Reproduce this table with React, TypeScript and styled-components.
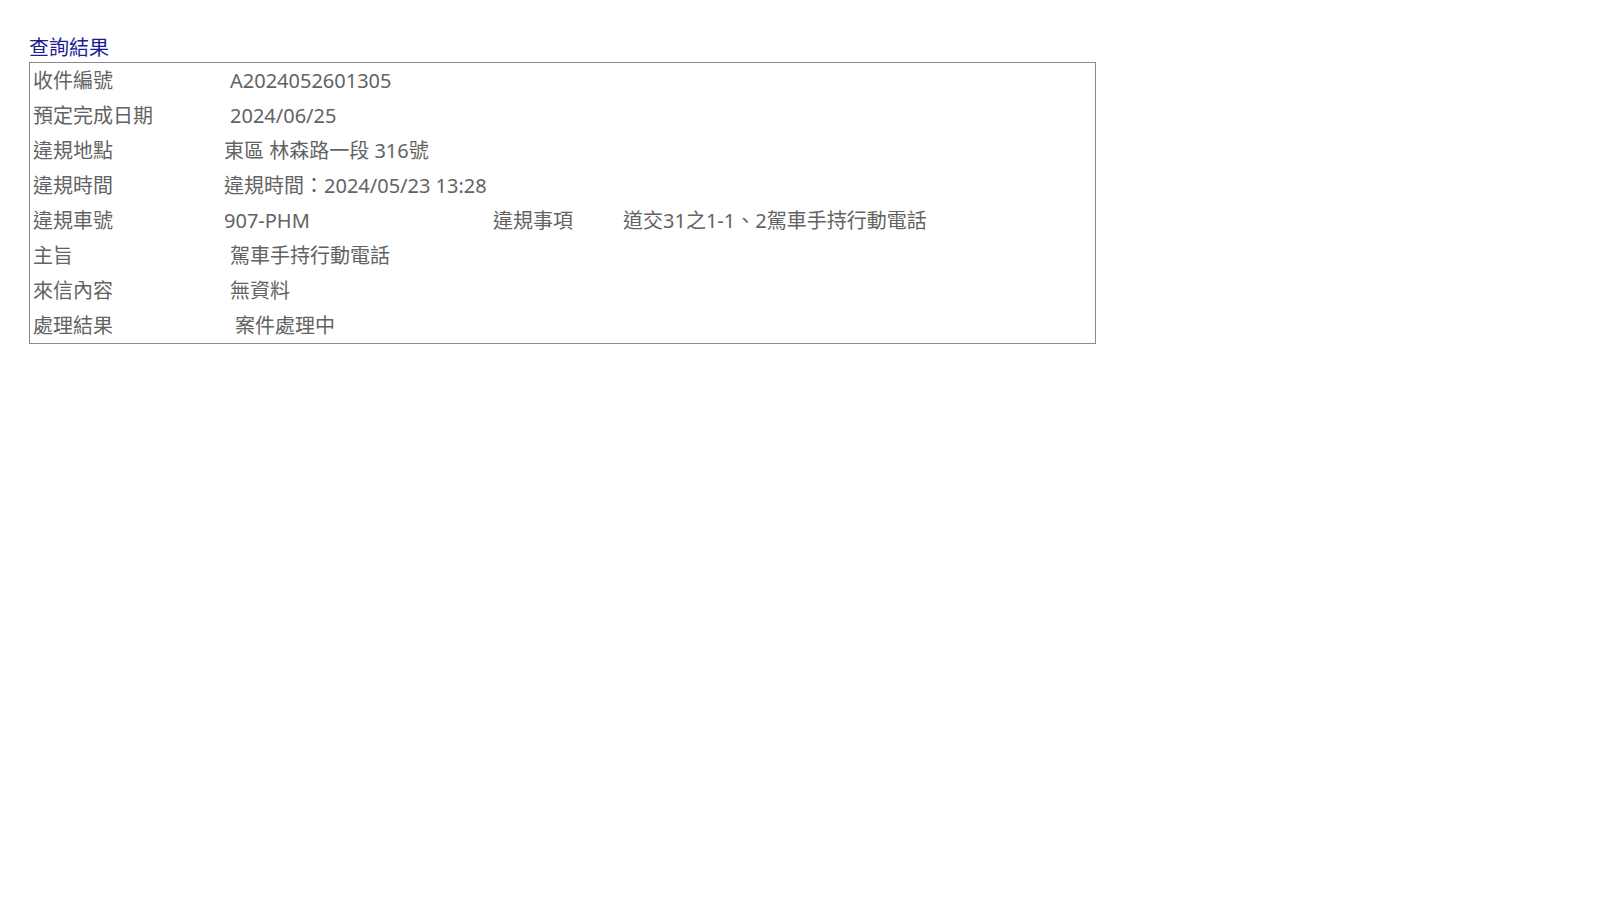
import React from "react";
import styled, { createGlobalStyle } from "styled-components";

const GlobalStyle = createGlobalStyle`
  html, body {
    margin: 0;
    padding: 0;
    background: #ffffff;
  }
  body {
    font-family: "Noto Sans", "Noto Sans CJK TC", sans-serif;
  }
`;

const Page = styled.div`
  padding: 33px 0 0 29px;
`;

const Title = styled.div`
  font-size: 20px;
  line-height: 29px;
  height: 29px;
  color: #1c1c96;
  white-space: nowrap;
`;

const ResultBox = styled.div`
  width: 1065px;
  border: 1px solid #8a8a8a;
  display: flex;
  flex-direction: column;
`;

const Row = styled.div`
  display: flex;
  align-items: center;
  height: 35px;
`;

const Label = styled.div<{ $width?: number }>`
  flex: 0 0 ${(p) => p.$width ?? 194}px;
  box-sizing: border-box;
  padding-left: 3px;
  font-size: 20px;
  line-height: 35px;
  color: #636363;
  white-space: nowrap;
`;

const InlineLabel = styled(Label)`
  padding-left: 0;
`;

const Value = styled.div<{ $indent?: number; $width?: number }>`
  ${(p) => (p.$width ? `flex: 0 0 ${p.$width}px;` : "flex: 1 1 auto;")}
  box-sizing: border-box;
  padding-left: ${(p) => p.$indent ?? 0}px;
  font-size: 20px;
  line-height: 35px;
  color: #636363;
  white-space: nowrap;
`;

type Item = { label: string; value: string; indent: number };

const rows: Item[] = [
  { label: "收件編號", value: "A2024052601305", indent: 6 },
  { label: "預定完成日期", value: "2024/06/25", indent: 6 },
  { label: "違規地點", value: "東區 林森路一段 316號", indent: 0 },
  { label: "違規時間", value: "違規時間：2024/05/23 13:28", indent: 0 },
];

const rowsAfter: Item[] = [
  { label: "主旨", value: "駕車手持行動電話", indent: 6 },
  { label: "來信內容", value: "無資料", indent: 6 },
  { label: "處理結果", value: "案件處理中", indent: 11 },
];

export default function App() {
  return (
    <>
      <GlobalStyle />
      <Page>
        <Title>查詢結果</Title>
        <ResultBox>
          {rows.map((r) => (
            <Row key={r.label}>
              <Label>{r.label}</Label>
              <Value $indent={r.indent}>{r.value}</Value>
            </Row>
          ))}
          <Row>
            <Label>違規車號</Label>
            <Value $width={269}>907-PHM</Value>
            <InlineLabel $width={130}>違規事項</InlineLabel>
            <Value>道交31之1-1、2駕車手持行動電話</Value>
          </Row>
          {rowsAfter.map((r) => (
            <Row key={r.label}>
              <Label>{r.label}</Label>
              <Value $indent={r.indent}>{r.value}</Value>
            </Row>
          ))}
        </ResultBox>
      </Page>
    </>
  );
}
